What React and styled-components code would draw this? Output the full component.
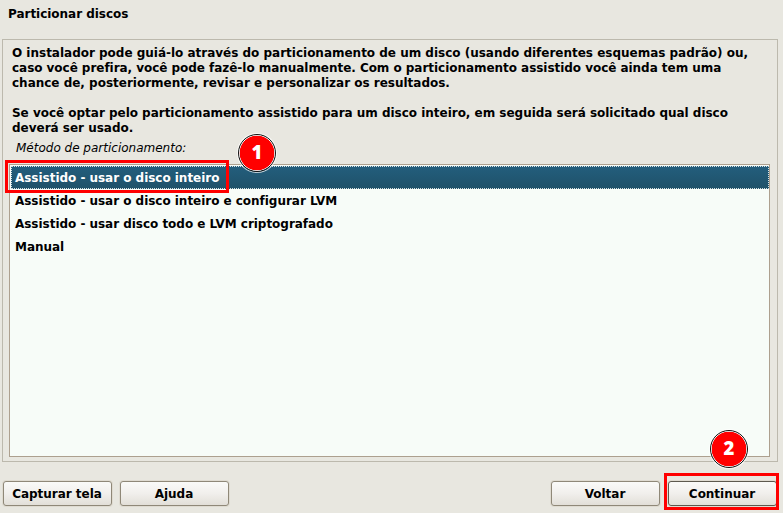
import React from "react";
import styled, { createGlobalStyle, css } from "styled-components";

const GlobalStyle = createGlobalStyle`
  * { box-sizing: border-box; }
  html, body { margin: 0; background: #e8e7e0; overflow: hidden; }
`;

const Window = styled.main`
  width: 783px;
  height: 513px;
  display: flex;
  flex-direction: column;
  background: #e8e7e0;
  color: #000;
  font: bold 12px/15px "DejaVu Sans", sans-serif;
  letter-spacing: -0.03px;
  font-variant-ligatures: common-ligatures;
  white-space: nowrap;
`;

const Title = styled.h1`
  margin: 0;
  height: 39px;
  padding: 7px 8px 0;
  font: inherit;
`;

const Panel = styled.section`
  display: flex;
  flex-direction: column;
  width: 776px;
  height: 423px;
  margin-left: 2px;
  padding: 6px 7px 4px 6px;
  border: 1px solid #bcb9ad;
`;

const Paragraph = styled.p`
  margin: 0 0 15px 3px;
  &:last-of-type { margin-bottom: 5px; }
`;

const Line = styled.span`
  display: block;
  letter-spacing: ${({ $spacing = -0.01 }) => $spacing}px;
`;

const Label = styled.div`
  margin-left: 7px;
  height: 23px;
  font-weight: normal;
  font-style: italic;
  letter-spacing: 0;
`;

const List = styled.div`
  flex: 1;
  display: flex;
  flex-direction: column;
  padding: 1px 0 0 1px;
  border: 1px solid #ada08f;
  background: #f7fcf8;
`;

const Option = styled.div`
  position: relative;
  height: 23px;
  padding: 5px 0 0 4px;
  ${({ $selected }) => $selected && css`
    color: #fff;
    background: linear-gradient(#235e7d, #1f5169);
    outline: 1px dotted #d5e0e2;
    outline-offset: -1px;
  `}
`;

const Actions = styled.footer`
  display: flex;
  gap: 8px;
  padding: 19px 6px 0 3px;
`;

const Spacer = styled.div`
  flex: 1;
`;

const Action = styled.button`
  position: relative;
  width: 109px;
  height: 25px;
  padding: 2px 1px 0 0;
  border: 1px solid ${({ $primary }) => ($primary ? "#5d594e" : "#8f8878")};
  border-radius: 3px;
  background: linear-gradient(#fafaf8, #f1efec 50%, #e2dfd8);
  box-shadow: 0 0 0 1px #dfdbd1;
  color: #000;
  font: inherit;
  letter-spacing: inherit;
`;

const Highlight = styled.span`
  position: absolute;
  z-index: 1;
  left: ${({ $x }) => $x}px;
  top: ${({ $y }) => $y}px;
  width: ${({ $w }) => $w}px;
  height: ${({ $h }) => $h}px;
  border: 3px solid #f00;
`;

const Badge = styled.span`
  position: absolute;
  z-index: 2;
  left: ${({ $x }) => $x}px;
  top: ${({ $y }) => $y}px;
  width: 38px;
  height: 38px;
  padding-bottom: 3px;
  display: flex;
  align-items: center;
  justify-content: center;
  border: 1.5px solid #111;
  border-radius: 50%;
  background: radial-gradient(circle, #f00 17px, #fff 17.6px);
  box-shadow: 0 0 0 1px #ffffffb0;
  color: #fff;
  font: 800 18.5px/20px "Open Sans", sans-serif;
`;

const options = [
  "Assistido - usar o disco inteiro",
  "Assistido - usar o disco inteiro e configurar LVM",
  "Assistido - usar disco todo e LVM criptografado",
  "Manual",
];

export default function App() {
  return (
    <Window>
      <GlobalStyle />
      <Title>Particionar discos</Title>
      <Panel>
        <Paragraph>
          <Line>O instalador pode guiá-lo através do particionamento de um disco (usando diferentes esquemas padrão) ou,</Line>
          <Line $spacing={-0.04}>caso você prefira, você pode fazê-lo manualmente. Com o particionamento assistido você ainda tem uma</Line>
          <Line>chance de, posteriormente, revisar e personalizar os resultados.</Line>
        </Paragraph>
        <Paragraph>
          <Line $spacing={-0.02}>Se você optar pelo particionamento assistido para um disco inteiro, em seguida será solicitado qual disco</Line>
          <Line>deverá ser usado.</Line>
        </Paragraph>
        <Label>Método de particionamento:</Label>
        <List>
          {options.map((text, i) => (
            <Option key={text} $selected={i === 0}>
              {text}
              {i === 0 && (
                <>
                  <Highlight $x={-6} $y={-6} $w={224} $h={33} />
                  <Badge $x={227} $y={-32}>1</Badge>
                </>
              )}
            </Option>
          ))}
        </List>
      </Panel>
      <Actions>
        <Action>Capturar tela</Action>
        <Action>Ajuda</Action>
        <Spacer />
        <Action>Voltar</Action>
        <Action $primary>
          Continuar
          <Highlight $x={-5} $y={-9} $w={115} $h={37} />
          <Badge $x={41} $y={-52}>2</Badge>
        </Action>
      </Actions>
    </Window>
  );
}
